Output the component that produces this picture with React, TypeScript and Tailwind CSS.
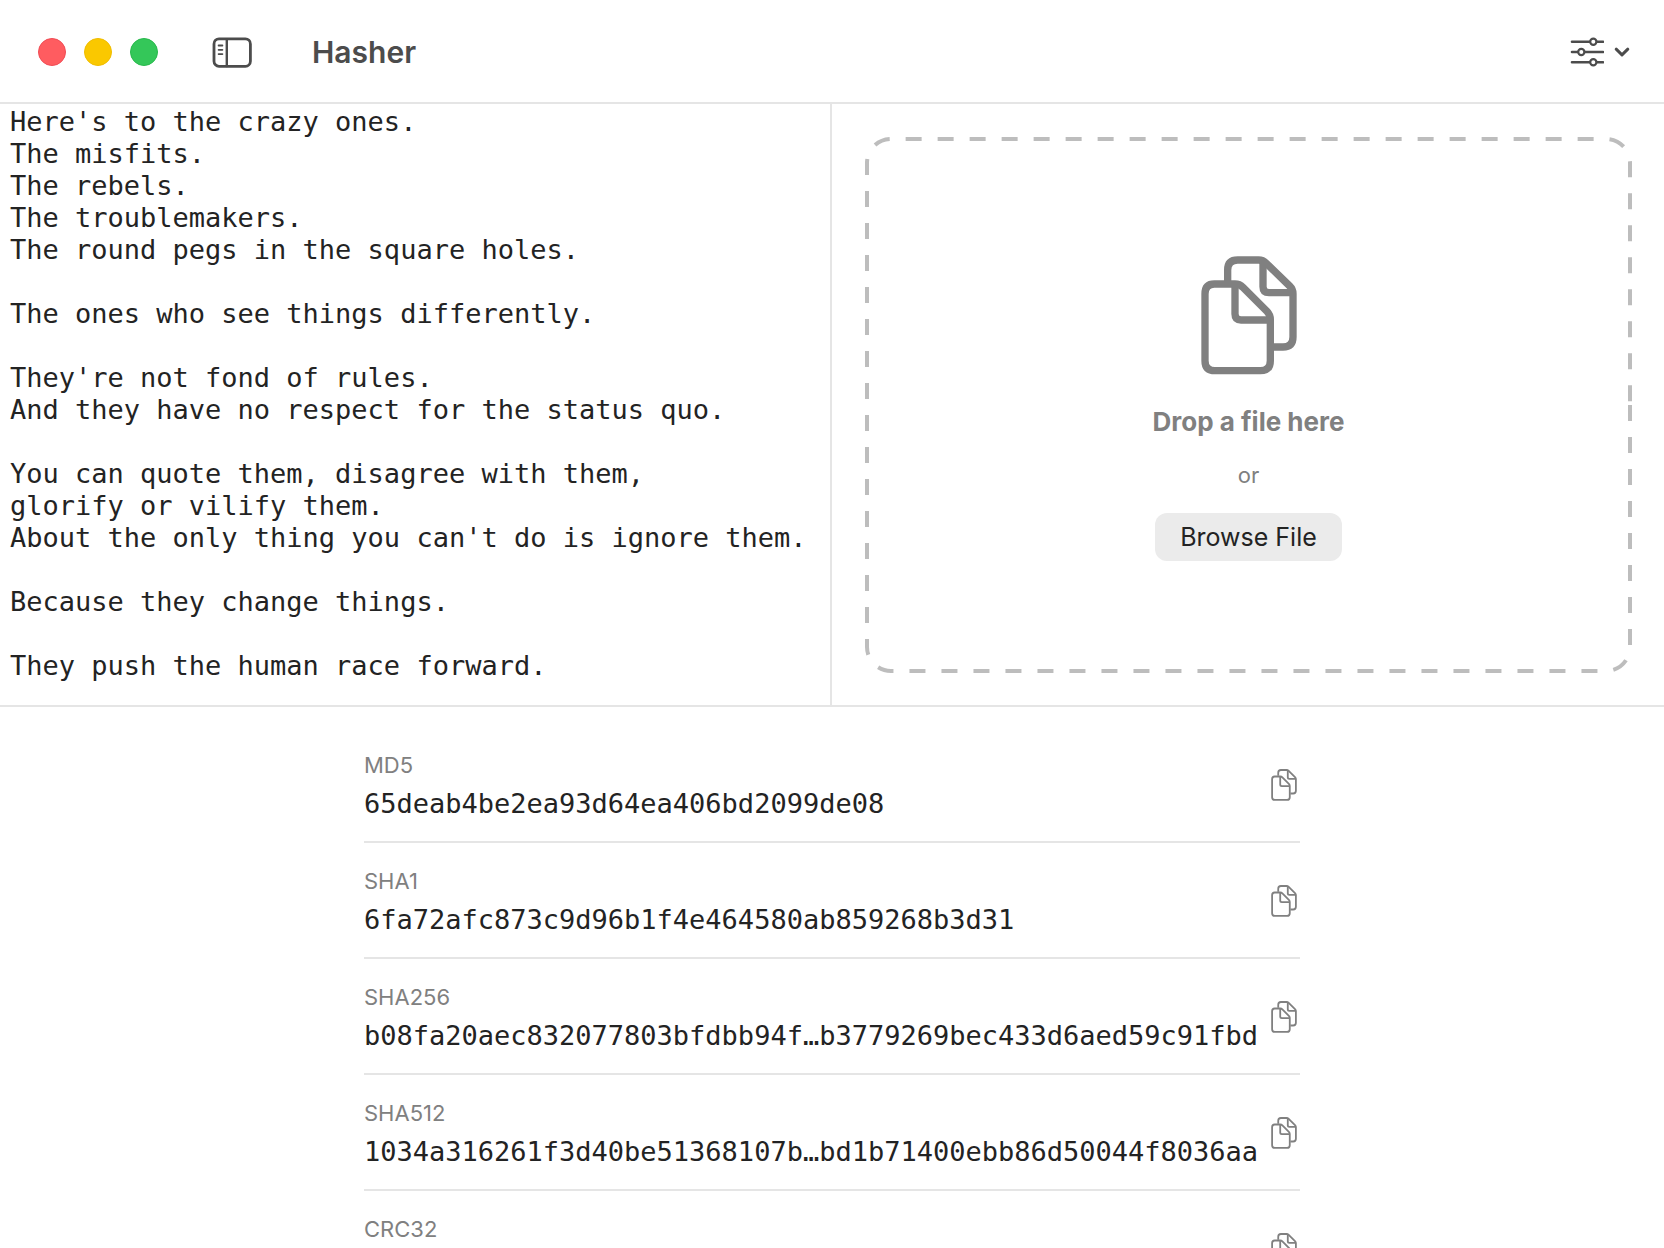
const quote = `Here's to the crazy ones.
The misfits.
The rebels.
The troublemakers.
The round pegs in the square holes.

The ones who see things differently.

They're not fond of rules.
And they have no respect for the status quo.

You can quote them, disagree with them,
glorify or vilify them.
About the only thing you can't do is ignore them.

Because they change things.

They push the human race forward.`;

const hashes = [
  { name: "MD5", value: "65deab4be2ea93d64ea406bd2099de08" },
  { name: "SHA1", value: "6fa72afc873c9d96b1f4e464580ab859268b3d31" },
  { name: "SHA256", value: "b08fa20aec832077803bfdbb94f…b3779269bec433d6aed59c91fbd" },
  { name: "SHA512", value: "1034a316261f3d40be51368107b…bd1b71400ebb86d50044f8036aa" },
  { name: "CRC32", value: "" },
];

function DocsIcon({ className, strokeWidth }: { className: string; strokeWidth: number }) {
  return (
    <svg viewBox="213 77 288 355" className={className} fill="none" stroke="currentColor" strokeWidth={strokeWidth} aria-hidden="true">
      <path d="M315 160H253Q225 160 225 190V390Q225 420 255 420H391Q421 420 421 390V266Q421 252 411 242L339 170Q329 160 315 160Z" />
      <path d="M315 160V250Q315 268 333 268H421" />
      <path d="M293 152V118Q293 88 323 88H386Q399 88 409 98L479 166Q489 176 489 189V319Q489 349 459 349H428" />
      <path d="M399 92V168Q399 186 417 186H488" />
    </svg>
  );
}

function SidebarIcon() {
  return (
    <svg viewBox="0 0 40 32" className="h-8 w-10" fill="none" stroke="currentColor" strokeLinecap="round" aria-hidden="true">
      <rect x="2" y="2.9" width="36.4" height="27.4" rx="5" strokeWidth="2.8" />
      <path d="M14.8 3.5V30" strokeWidth="2.4" />
      <path d="M6.6 9.5H10.4M6.6 13.8H10.4M6.6 18.1H10.4" strokeWidth="1.8" />
    </svg>
  );
}

function SlidersIcon() {
  return (
    <svg viewBox="0 0 34 30" className="h-[30px] w-[34px]" fill="none" stroke="currentColor" strokeWidth="2.6" strokeLinecap="round" aria-hidden="true">
      <path d="M2 4.8H19.4M27.2 4.8H33M2 15H7.4M15.2 15H33M2 25.2H19.4M27.2 25.2H33" />
      <circle cx="23.3" cy="4.8" r="3.1" strokeWidth="2.2" />
      <circle cx="11.3" cy="15" r="3.1" strokeWidth="2.2" />
      <circle cx="23.3" cy="25.2" r="3.1" strokeWidth="2.2" />
    </svg>
  );
}

export default function App() {
  return (
    <div className="h-screen overflow-hidden bg-white font-['Inter',sans-serif] text-[#232323]">
      <header className="flex items-center border-b-2 border-[#e5e5e5] pt-[35px] pr-[34px] pb-[33px] pl-[38px] text-[#4c4c4c]">
        <div className="flex gap-[18px]">
          <button aria-label="Close" className="size-7 rounded-full border border-[#f14c55] bg-[#ff5c60]" />
          <button aria-label="Minimize" className="size-7 rounded-full border border-[#f0bd00] bg-[#fac800]" />
          <button aria-label="Zoom" className="size-7 rounded-full border border-[#28b94c] bg-[#34c759]" />
        </div>
        <button aria-label="Toggle sidebar" className="ml-[54px]">
          <SidebarIcon />
        </button>
        <h1 className="ml-[60px] text-[30px] leading-[34px] font-semibold">Hasher</h1>
        <button aria-label="Options" className="ml-auto flex items-center gap-2.5">
          <SlidersIcon />
          <svg viewBox="0 0 16 10" className="h-2.5 w-4" fill="none" stroke="currentColor" strokeWidth="3" strokeLinecap="round" strokeLinejoin="round" aria-hidden="true">
            <path d="M2.2 2.2L8 7.8L13.8 2.2" />
          </svg>
        </button>
      </header>

      <main>
        <section className="grid grid-cols-2 border-b-2 border-[#e5e5e5]">
          <textarea
            aria-label="Text to hash"
            defaultValue={quote}
            spellCheck={false}
            rows={18}
            className="resize-none overflow-hidden border-r-2 border-[#e5e5e5] pt-0.5 pl-2.5 font-['DejaVu_Sans_Mono',monospace] text-[27px] leading-8 whitespace-pre outline-none"
          />
          <div className="p-8 pt-[33px] pl-[33px]">
            <div className="relative flex flex-col items-center pt-[119px] pb-28 text-[#808080]">
              <svg viewBox="0 0 763 532" preserveAspectRatio="none" className="absolute top-0.5 left-0.5 h-[calc(100%-4px)] w-[calc(100%-4px)] overflow-visible" aria-hidden="true">
                <path
                  d="M763 266V508A24 24 0 0 1 739 532H24A24 24 0 0 1 0 508V24A24 24 0 0 1 24 0H739A24 24 0 0 1 763 24Z"
                  fill="none"
                  stroke="#bdbdbd"
                  strokeWidth="4"
                  strokeDasharray="16"
                  vectorEffect="non-scaling-stroke"
                />
              </svg>
              <DocsIcon className="h-[119px] w-24" strokeWidth={22} />
              <p className="mt-[31px] text-[26px] leading-8 font-bold">Drop a file here</p>
              <p className="mt-[23px] text-[22px] leading-7">or</p>
              <button className="mt-6 rounded-xl bg-[#ebebeb] px-[25px] text-[25px] leading-[48px] text-[#232323]">Browse File</button>
            </div>
          </div>
        </section>

        <ul className="mx-auto max-w-[936px] pt-5">
          {hashes.map((hash) => (
            <li key={hash.name} className="flex items-center justify-between border-b-2 border-[#e5e5e5] pt-[22px] pr-[3px] pb-5">
              <div>
                <h2 className="text-[22px] leading-8 text-[#808080]">{hash.name}</h2>
                <p className="mt-1.5 h-[34px] font-['DejaVu_Sans_Mono',monospace] text-[27px] leading-[34px]">{hash.value}</p>
              </div>
              <button aria-label={`Copy ${hash.name}`} className="text-[#808080]">
                <DocsIcon className="h-8 w-[26px]" strokeWidth={20} />
              </button>
            </li>
          ))}
        </ul>
      </main>
    </div>
  );
}
